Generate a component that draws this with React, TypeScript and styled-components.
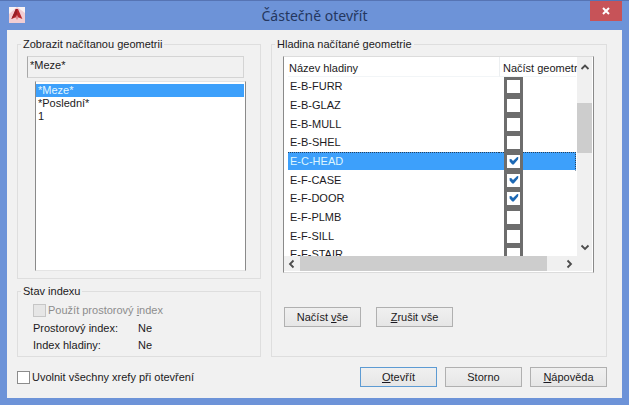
import React, { useState } from "react";
import styled, { createGlobalStyle, css } from "styled-components";

const GlobalStyle = createGlobalStyle`
  *, *::before, *::after { box-sizing: border-box; }
  body {
    margin: 0;
    background: #6d93d8;
    color: #1c1a22;
    font: 11px/14px "Liberation Sans", Arial, sans-serif;
  }
  button, input { font: inherit; color: inherit; }
`;

const Dialog = styled.main`
  display: flex;
  flex-direction: column;
  min-height: 100vh;
  padding: 0 7px 7px;
  background: #6d93d8;
  border-top: 1px solid #5674b4;
`;

const TitleBar = styled.header`
  display: grid;
  grid-template-columns: 32px 1fr 32px;
  align-items: start;
  height: 29px;
`;

const AppIcon = styled.svg`
  display: block;
  width: 16px;
  height: 16px;
  margin: 6px 0 0 2px;
`;

const Title = styled.h1`
  margin: 0;
  padding-top: 5px;
  text-align: center;
  font: 400 14px/20px "Noto Sans", "Open Sans", sans-serif;
  color: #24375f;
`;

const CloseButton = styled.button`
  display: grid;
  place-items: center;
  width: 32px;
  height: 20px;
  padding: 0;
  border: 0;
  background: #c75358;
`;

const Client = styled.form`
  flex: 1;
  display: flex;
  flex-direction: column;
  gap: 10px;
  padding: 7px 15px 10px 10px;
  background: #f1f1f1;
`;

const Columns = styled.div`
  display: grid;
  grid-template-columns: 244fr 336fr;
  gap: 10px;
`;

const LeftColumn = styled.div`
  display: flex;
  flex-direction: column;
  gap: 5px;
`;

const Group = styled.fieldset`
  min-width: 0;
  margin: 0;
  padding: 5px 12px 7px 11px;
  border: 1px solid #dedede;
`;

const GeometryGroup = styled(Group)`
  padding: 5px 14px 7px 17px;
`;

const IndexGroup = styled(Group)`
  flex: 1;
  padding: 5px 15px 3px;
`;

const Legend = styled.legend`
  margin-left: -8px;
  padding: 0 2px;
`;

const GeometryLegend = styled(Legend)`
  margin-left: -14px;
`;

const IndexLegend = styled(Legend)`
  margin-left: -12px;
`;

const ViewName = styled.input`
  display: block;
  width: calc(100% + 6px);
  height: 22px;
  margin: 0 0 3px -8px;
  padding: 0 2px 4px;
  border: 1px solid #d4d4d4;
  border-left-color: #a8a8a8;
  background: #f1f1f1;
  outline: 0;
`;

const ViewList = styled.ul`
  height: 190px;
  margin: 0;
  padding: 2px 1px 0 0;
  list-style: none;
  border: 1px solid #e4e4e4;
  border-left-color: #8a8a8a;
  border-right-color: #8a8a8a;
  background: #fff;
`;

const ViewItem = styled.li<{ $selected: boolean }>`
  padding: 0 2px;
  line-height: 13px;
  cursor: default;
  ${(p) => p.$selected && css`
    background: #3da0fb;
    color: #e4f7ff;
  `}
`;

const CheckLabel = styled.label<{ $muted?: boolean }>`
  display: flex;
  align-items: center;
  gap: 2px;
  color: ${(p) => (p.$muted ? "#8d8d8d" : "inherit")};
`;

const CheckFrame = styled.span`
  display: grid;
  flex: none;
  width: 13px;
  height: 13px;
  > * { grid-area: 1 / 1; }
`;

const CheckInput = styled.input<{ $flat?: boolean }>`
  appearance: none;
  width: 13px;
  height: 13px;
  margin: 0;
  background: #fff;
  border: ${(p) => (p.$flat ? "0" : "1px solid #8c8c8c")};
  &:disabled {
    background: #e6e6e6;
    border-color: #c6c6c6;
  }
`;

const Tick = styled.svg`
  width: 13px;
  height: 13px;
  pointer-events: none;
`;

const IndexFacts = styled.dl`
  display: grid;
  grid-template-columns: 105px 1fr;
  row-gap: 3px;
  margin: 4px 0 0;
  dd { margin: 0; }
`;

const LayerList = styled.div`
  display: grid;
  grid-template: 199px 15px / 1fr 15px;
  padding-right: 1px;
  padding-bottom: 1px;
  border: 1px solid #dcdcdc;
  border-left-color: #8a8a8a;
  border-right-color: #8a8a8a;
  background: #fff;
`;

const LayerView = styled.div`
  overflow: hidden;
  padding: 0 1px 0 4px;
`;

const LayerTable = styled.table`
  width: 100%;
  table-layout: fixed;
  border-collapse: separate;
  border-spacing: 0;
  .mark { width: 77px; }
`;

const HeadCell = styled.th`
  height: 20px;
  padding: 2px 0 0 1px;
  white-space: nowrap;
  text-align: left;
  font-weight: 400;
  border-bottom: 1px solid #f2f5f7;
  & + & {
    padding-left: 3px;
    border-left: 1px solid #eceff1;
  }
`;

const LayerRow = styled.tr<{ $selected: boolean }>`
  height: 19px;
  &:nth-child(3n) { height: 18px; }
  ${(p) => p.$selected && css`
    color: #dcf6ff;
    td {
      background: #3da0fb;
      border-top: 1px dotted #27415c;
      border-bottom: 1px solid #fff;
    }
    td:last-child { border-right: 1px dotted #27415c; }
  `}
`;

const LayerCell = styled.td`
  padding: 0 0 1px 2px;
  line-height: 14px;
`;

const MarkCell = styled.td`
  padding: 0 0 0 5px;
`;

const MarkStrip = styled.span`
  display: flex;
  justify-content: center;
  align-items: center;
  width: 19px;
  height: 17px;
  background: #6d6d6d;
  box-shadow: 0 1px #6d6d6d, 0 -1px #6d6d6d;
`;

const ScrollTrack = styled.div<{ $across?: boolean }>`
  display: grid;
  background: #f0f0f0;
  ${(p) => p.$across
    ? css`grid-template-columns: 16px 246fr 14fr 16px;`
    : css`grid-template-rows: 46px 50px 1fr 18px;`}
`;

const ScrollButton = styled.button<{ $last?: boolean; $top?: boolean }>`
  display: flex;
  align-items: ${(p) => (p.$top ? "flex-start" : "center")};
  justify-content: center;
  padding: ${(p) => (p.$top ? "5px 0 0" : "0")};
  border: 0;
  background: transparent;
  ${(p) => p.$last && css`grid-row-end: -1; grid-column-end: -1;`}
`;

const ScrollThumb = styled.div`
  background: #cdcdcd;
`;

const ButtonRow = styled.div<{ $gap: number }>`
  display: flex;
  gap: ${(p) => p.$gap}px;
`;

const LayerActions = styled(ButtonRow)`
  margin: 34px 0 22px 1px;
`;

const PushButton = styled.button<{ $default?: boolean }>`
  width: 77px;
  height: 20px;
  padding: 0;
  border: 1px solid ${(p) => (p.$default ? "#5d9bd3" : "#b0b0b0")};
  background: linear-gradient(#f0f0f0, #e6e6e6);
`;

const Footer = styled.footer`
  display: flex;
  justify-content: space-between;
  align-items: center;
`;

const chevrons = {
  up: "M1.5 7 5 3.5 8.5 7",
  down: "M1.5 3.5 5 7 8.5 3.5",
  left: "M6.5 1.5 3 5 6.5 8.5",
  right: "M3.5 1.5 7 5 3.5 8.5",
};

function Chevron({ to }: { to: keyof typeof chevrons }) {
  return (
    <svg width="10" height="10" viewBox="0 0 10 10" aria-hidden="true">
      <path d={chevrons[to]} fill="none" stroke="#4c4c4c" strokeWidth="1.8" />
    </svg>
  );
}

type CheckProps = React.InputHTMLAttributes<HTMLInputElement> & { flat?: boolean };

function CheckBox({ flat, ...rest }: CheckProps) {
  return (
    <CheckFrame>
      <CheckInput type="checkbox" $flat={flat} {...rest} />
      {rest.checked && (
        <Tick viewBox="0 0 13 13" aria-hidden="true">
          <path d="M2.6 4 4.5 4.3 6 6 10.2 2 11.4 2.3 11 4.6 6.7 9.4 5.3 9.4 2.6 6.6Z" fill="#1c68b4" />
        </Tick>
      )}
    </CheckFrame>
  );
}

const views = ["*Meze*", "*Poslední*", "1"];
const layers = [
  "E-B-FURR", "E-B-GLAZ", "E-B-MULL", "E-B-SHEL", "E-C-HEAD",
  "E-F-CASE", "E-F-DOOR", "E-F-PLMB", "E-F-SILL", "E-F-STAIR",
];

export default function App() {
  const [view, setView] = useState(views[0]);
  const [current, setCurrent] = useState("E-C-HEAD");
  const [loaded, setLoaded] = useState(["E-C-HEAD", "E-F-CASE", "E-F-DOOR"]);
  const [unload, setUnload] = useState(false);

  const toggle = (name: string) =>
    setLoaded((all) => (all.includes(name) ? all.filter((n) => n !== name) : [...all, name]));

  return (
    <>
      <GlobalStyle />
      <Dialog>
        <TitleBar>
          <AppIcon viewBox="0 0 16 16" aria-hidden="true">
            <rect width="16" height="16" fill="#f1cdd3" />
            <path d="M0 0H16V6L8 0 0 7Z" fill="#faf3f5" />
            <path d="M6.8 2H9L13.4 12 9.8 10.4H6.2L2.4 12Z" fill="#b5272d" />
            <path d="M6.8 2H8V7L5.5 9.5 2.4 12Z" fill="#981f27" />
            <path d="M6.6 10.4 8 8 9.4 10.4 8 13Z" fill="#e0868d" />
          </AppIcon>
          <Title>Částečně otevřít</Title>
          <CloseButton type="button" aria-label="Zavřít">
            <svg width="8" height="8" viewBox="0 0 8 8" aria-hidden="true">
              <path d="M1 1 7 7M7 1 1 7" stroke="#fff" strokeWidth="2" />
            </svg>
          </CloseButton>
        </TitleBar>

        <Client onSubmit={(e) => e.preventDefault()}>
          <Columns>
            <LeftColumn>
              <GeometryGroup>
                <GeometryLegend>Zobrazit načítanou geometrii</GeometryLegend>
                <ViewName aria-label="Zobrazit načítanou geometrii" value={view} readOnly />
                <ViewList role="listbox" aria-label="Pohledy">
                  {views.map((name) => (
                    <ViewItem
                      key={name}
                      role="option"
                      aria-selected={name === view}
                      $selected={name === view}
                      onClick={() => setView(name)}
                    >
                      {name}
                    </ViewItem>
                  ))}
                </ViewList>
              </GeometryGroup>

              <IndexGroup>
                <IndexLegend>Stav indexu</IndexLegend>
                <CheckLabel $muted>
                  <CheckBox disabled />
                  <span>Použít prostorový <u>i</u>ndex</span>
                </CheckLabel>
                <IndexFacts>
                  <dt>Prostorový index:</dt>
                  <dd>Ne</dd>
                  <dt>Index hladiny:</dt>
                  <dd>Ne</dd>
                </IndexFacts>
              </IndexGroup>
            </LeftColumn>

            <Group>
              <Legend>Hladina načítané geometrie</Legend>
              <LayerList>
                <LayerView>
                  <LayerTable>
                    <colgroup>
                      <col />
                      <col className="mark" />
                    </colgroup>
                    <thead>
                      <tr>
                        <HeadCell>Název hladiny</HeadCell>
                        <HeadCell>Načíst geometr</HeadCell>
                      </tr>
                    </thead>
                    <tbody>
                      {layers.map((name) => (
                        <LayerRow
                          key={name}
                          $selected={name === current}
                          onClick={() => setCurrent(name)}
                        >
                          <LayerCell>{name}</LayerCell>
                          <MarkCell>
                            <MarkStrip>
                              <CheckBox
                                flat
                                aria-label={name}
                                checked={loaded.includes(name)}
                                onChange={() => toggle(name)}
                              />
                            </MarkStrip>
                          </MarkCell>
                        </LayerRow>
                      ))}
                    </tbody>
                  </LayerTable>
                </LayerView>
                <ScrollTrack>
                  <ScrollButton type="button" aria-label="Nahoru" $top><Chevron to="up" /></ScrollButton>
                  <ScrollThumb />
                  <ScrollButton type="button" aria-label="Dolů" $last><Chevron to="down" /></ScrollButton>
                </ScrollTrack>
                <ScrollTrack $across>
                  <ScrollButton type="button" aria-label="Vlevo"><Chevron to="left" /></ScrollButton>
                  <ScrollThumb />
                  <ScrollButton type="button" aria-label="Vpravo" $last><Chevron to="right" /></ScrollButton>
                </ScrollTrack>
                <ScrollTrack />
              </LayerList>
              <LayerActions $gap={15}>
                <PushButton type="button" onClick={() => setLoaded(layers)}>Načíst <u>v</u>še</PushButton>
                <PushButton type="button" onClick={() => setLoaded([])}><u>Z</u>rušit vše</PushButton>
              </LayerActions>
            </Group>
          </Columns>

          <Footer>
            <CheckLabel>
              <CheckBox checked={unload} onChange={(e) => setUnload(e.target.checked)} />
              <span>Uvolnit všechny xrefy při otevření</span>
            </CheckLabel>
            <ButtonRow $gap={8}>
              <PushButton type="submit" $default><u>O</u>tevřít</PushButton>
              <PushButton type="button">Storno</PushButton>
              <PushButton type="button"><u>N</u>ápověda</PushButton>
            </ButtonRow>
          </Footer>
        </Client>
      </Dialog>
    </>
  );
}
